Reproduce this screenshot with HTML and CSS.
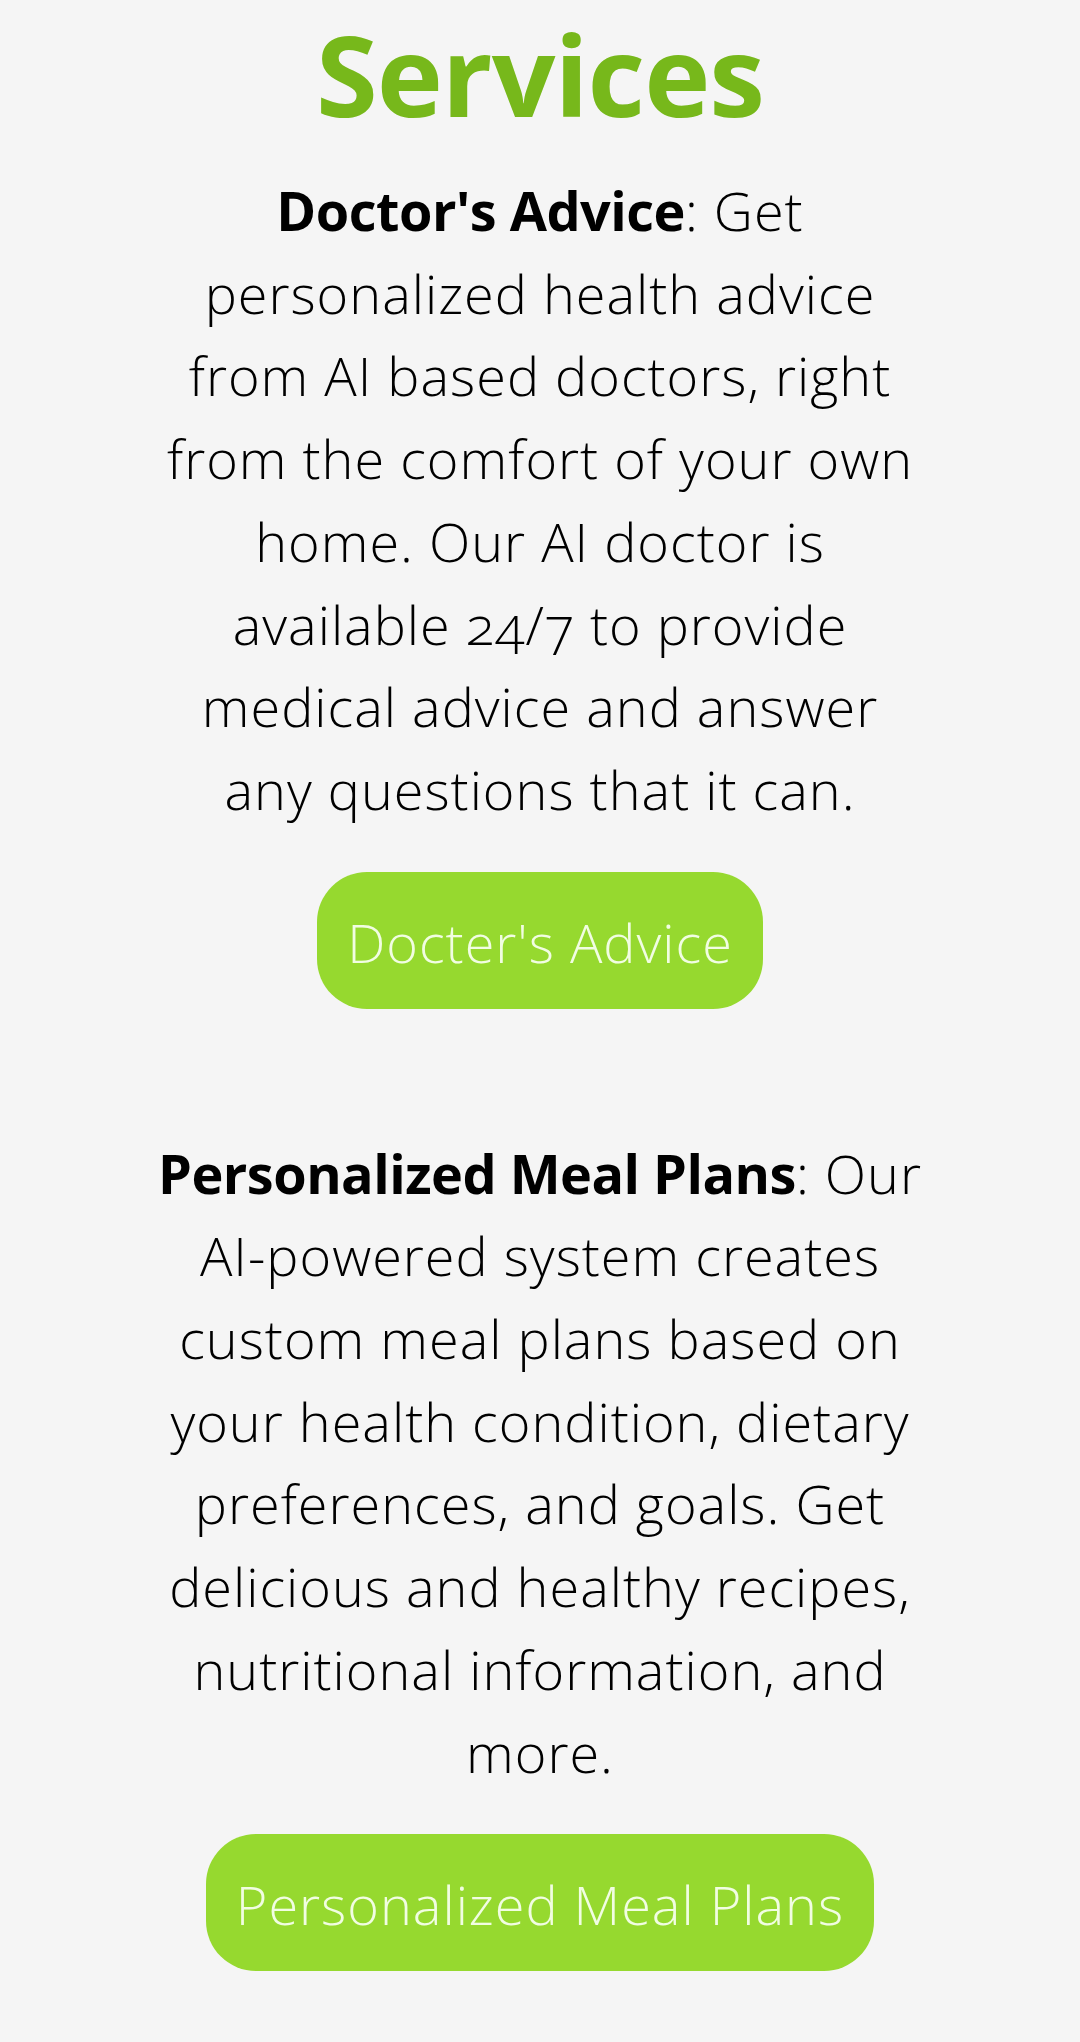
FILE: index.html
```html
<!DOCTYPE html>
<html lang="en">
<head>
<meta charset="utf-8">
<title>Services</title>
<link rel="stylesheet" href="styles.css">
</head>
<body>
<section class="services">
  <h1 class="services-title">Services</h1>
  <div class="service">
    <p class="service-text"><strong>Doctor's Advice</strong>: Get personalized health advice from AI based doctors, right from the comfort of your own home. Our AI doctor is available 24/7 to provide medical advice and answer any questions that it can.</p>
    <a class="service-btn" href="#">Docter's Advice</a>
  </div>
  <div class="service">
    <p class="service-text"><strong>Personalized Meal Plans</strong>: Our AI-powered system creates custom meal plans based on your health condition, dietary preferences, and goals. Get delicious and healthy recipes, nutritional information, and more.</p>
    <a class="service-btn" href="#">Personalized Meal Plans</a>
  </div>
</section>
</body>
</html>
```
FILE: styles.css
```css
html, body {
  margin: 0;
  padding: 0;
  background: #f5f5f5;
}
body {
  font-family: "Open Sans", Lato, sans-serif;
  color: #000;
  font-variant-ligatures: none;
}
.services {
  display: flex;
  flex-direction: column;
  align-items: center;
  text-align: center;
  padding-top: 7px;
}
.services-title {
  margin: 0;
  font-size: 112px;
  font-weight: 700;
  letter-spacing: -1px;
  line-height: 134px;
  color: #77b81b;
}
.service {
  display: flex;
  flex-direction: column;
  align-items: center;
  width: 765px;
  padding: 28px 0 95px;
}
.service-text {
  margin: 0;
  font-size: 54px;
  font-weight: 350;
  letter-spacing: 1px;
  line-height: 82.7px;
  font-variant-numeric: oldstyle-nums;
}
.service-text strong {
  font-weight: 700;
  letter-spacing: -0.5px;
}
.service-btn {
  margin-top: 41px;
  display: inline-block;
  padding: 0 30px;
  height: 137px;
  line-height: 140px;
  border-radius: 50px;
  background: #96d92f;
  color: #f1fde2;
  font-size: 54px;
  font-weight: 350;
  letter-spacing: 1px;
  text-decoration: none;
}
```
